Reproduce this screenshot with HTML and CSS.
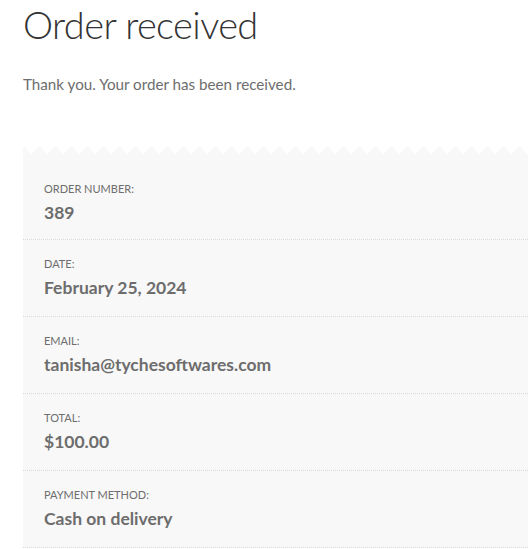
FILE: index.html
```html
<!DOCTYPE html>
<html lang="en">
<head>
    <meta charset="UTF-8">
    <meta name="viewport" content="width=device-width, initial-scale=1.0">
    <title>Order received</title>
    <link rel="stylesheet" href="styles.css">
</head>
<body>
    <div class="page">
        <h1 class="entry-title">Order received</h1>
        <p class="thankyou">Thank you. Your order has been received.</p>

        <ul class="order-overview">
            <li class="overview-item">
                <span class="label">Order number:</span>
                <strong class="value">389</strong>
            </li>
            <li class="overview-item">
                <span class="label">Date:</span>
                <strong class="value">February 25, 2024</strong>
            </li>
            <li class="overview-item">
                <span class="label">Email:</span>
                <strong class="value">tanisha@tychesoftwares.com</strong>
            </li>
            <li class="overview-item">
                <span class="label">Total:</span>
                <strong class="value">$100.00</strong>
            </li>
            <li class="overview-item">
                <span class="label">Payment method:</span>
                <strong class="value">Cash on delivery</strong>
            </li>
        </ul>
    </div>
</body>
</html>
```

FILE: styles.css
```css
* {
    margin: 0;
    padding: 0;
    box-sizing: border-box;
}

body {
    font-family: Lato, "Open Sans", sans-serif;
    color: #6d6d6d;
    background: #fff;
    overflow: hidden;
}

.page {
    padding-left: 23px;
}

.entry-title {
    font-weight: 300;
    font-size: 38px;
    letter-spacing: -0.6px;
    line-height: 48px;
    color: #333;
}

.thankyou {
    font-size: 15.2px;
    line-height: 24px;
    margin-top: 24px;
}

.order-overview {
    list-style: none;
    margin-top: 58px;
    background: #f8f8f8;
    position: relative;
    padding-top: 10px;
}

/* zigzag top edge */
.order-overview::before {
    content: "";
    position: absolute;
    left: 0;
    right: 0;
    top: -8px;
    height: 8px;
    background: conic-gradient(from 135deg at 50% 0, #f8f8f8 90deg, transparent 0) -8px 0 / 16px 8px repeat-x;
}

.overview-item {
    padding: 14px 21px 13px;
    border-bottom: 1px dotted rgba(0, 0, 0, 0.12);
    height: 77px;
}

.overview-item:first-child {
    height: 76px;
    padding-top: 15px;
}

.label {
    display: block;
    text-transform: uppercase;
    font-size: 11px;
    line-height: 20px;
}

.value {
    display: block;
    font-size: 17.5px;
    line-height: 28px;
    font-weight: 700;
    color: #6d6d6d;
}
```
